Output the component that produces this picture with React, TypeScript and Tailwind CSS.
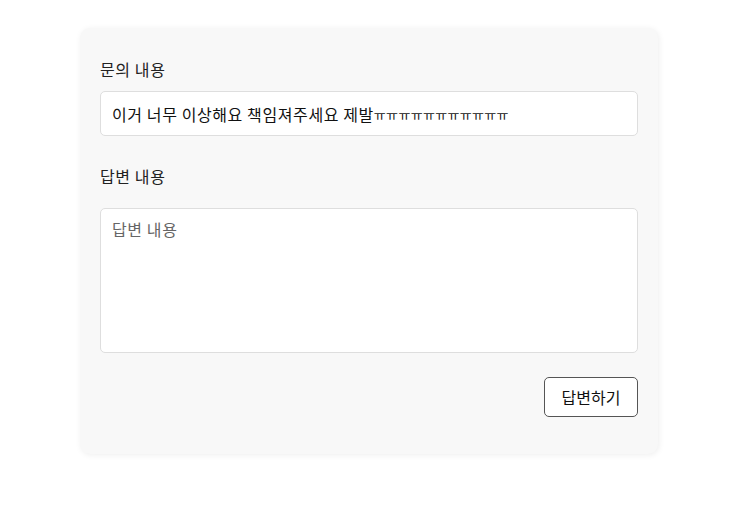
import React from "react";

export default function App() {
  const font = { fontFamily: '"Noto Sans CJK KR", "Noto Sans", sans-serif' };
  return (
    <div className="min-h-[525px] w-[750px] bg-white pt-[28px]" style={font}>
      <div className="ml-[80px] w-[578px] rounded-[10px] bg-[#f8f8f8] px-5 pb-[37px] pt-[29px] shadow-[1px_1px_6px_rgba(0,0,0,0.07)]">
        <div className="text-[16px] leading-[24px] tracking-[0.6px] text-[#222]">문의 내용</div>
        <div className="mt-[10px] flex h-[45px] items-center rounded-[5px] border border-[#dedede] bg-white px-[11px] text-[16px] tracking-[0.6px] text-[#111]">
          <span>이거 너무 이상해요 책임져주세요 제발</span>
          <span className="relative top-[1px] text-[13px] tracking-[0.3px]">ㅠㅠㅠㅠㅠㅠㅠㅠㅠㅠㅠ</span>
        </div>
        <div className="mt-[28px] text-[16px] leading-[24px] tracking-[0.6px] text-[#222]">답변 내용</div>
        <textarea
          placeholder="답변 내용"
          className="mt-[20px] block h-[145px] w-full resize-none rounded-[5px] border border-[#dedede] bg-white px-[11px] pb-[10px] pt-[8px] text-[16px] leading-[24px] tracking-[0.6px] text-[#111] outline-none placeholder:text-[#666]"
          style={font}
        />
        <div className="mt-[24px] flex justify-end">
          <button className="h-[40px] w-[94px] rounded-[5px] border border-[#555] bg-white text-[16px] text-[#111]" style={font}>
            답변하기
          </button>
        </div>
      </div>
    </div>
  );
}
